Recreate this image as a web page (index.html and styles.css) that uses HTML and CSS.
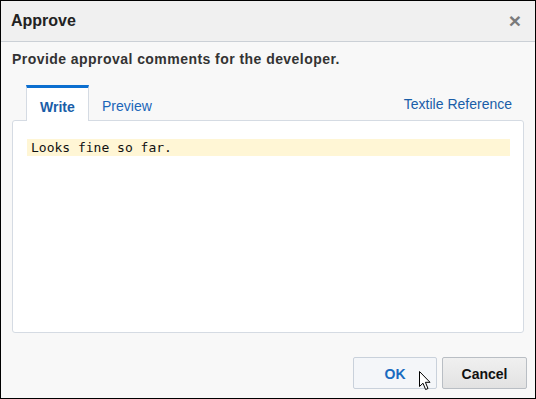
FILE: index.html
```html
<!DOCTYPE html>
<html lang="en">
<head>
    <meta charset="UTF-8">
    <title>Approve</title>
    <link rel="stylesheet" href="styles.css">
</head>
<body>
    <div class="dialog">
        <div class="dialog-header">
            <div class="dialog-title">Approve</div>
            <div class="dialog-close">&times;</div>
        </div>
        <div class="dialog-body">
            <div class="intro">Provide approval comments for the developer.</div>
            <div class="tabs">
                <div class="tab active">Write</div>
                <div class="tab">Preview</div>
                <div class="tab-link">Textile Reference</div>
            </div>
            <div class="editor">
                <div class="editor-line">Looks fine so far.</div>
            </div>
        </div>
        <div class="dialog-footer">
            <div class="btn btn-ok">OK
                <!-- mouse pointer -->
                <svg class="pointer" width="12" height="20" viewBox="0 0 12 20">
                    <path d="M0.5 0.5 L0.5 15.5 L4 12.2 L6.6 18.5 L9 17.5 L6.4 11.3 L11 11.3 Z" fill="#fff" stroke="#000" stroke-width="1"/>
                </svg>
            </div>
            <div class="btn btn-cancel">Cancel</div>
        </div>
    </div>
</body>
</html>
```

FILE: styles.css
```css
html, body { margin: 0; padding: 0; }
body { font-family: "Liberation Sans", Arial, sans-serif; background-color: #fff; }

.dialog {
width: 536px;
height: 399px;
box-sizing: border-box;
border: 1px solid #000;
background-color: #f8f8f8;
display: flex;
flex-direction: column;
}
.dialog > div { flex-shrink: 0; }

/* header */
.dialog-header {
height: 40px;
background-color: #f0f0f0;
border-bottom: 1px solid #cbd0d6;
display: flex;
align-items: center;
justify-content: space-between;
padding: 0 14px 0 10px;
}
.dialog-title { font-size: 16px; font-weight: bold; color: #222; }
.dialog-close { font-size: 21px; font-weight: bold; color: #7a7a7a; line-height: 1; margin-top: -1px; }

/* body */
.dialog-body { padding: 0 11px; }
.intro { font-size: 14px; letter-spacing: 0.45px; font-weight: bold; color: #333; margin-top: 9px; height: 17px; }

.tabs {
display: flex;
align-items: flex-end;
margin-top: 17px;
padding-left: 14px;
}
.tab {
height: 31px;
padding: 2px 13px 0 13px;
line-height: 34px;
font-size: 14px;
color: #1a66b8;
}
.tab.active {
border-top: 3px solid #0c6fd0;
border-left: 1px solid #d5dbe3;
border-right: 1px solid #d5dbe3;
background-color: #fff;
font-weight: bold;
color: #1a5ea8;
width: 35px;
margin-bottom: -1px;
position: relative;
}
.tab-link {
margin-left: auto;
margin-right: 12px;
font-size: 14px;
color: #1a5ea8;
line-height: 31px;
padding-top: 4px;
}

.editor {
height: 193px;
background-color: #fff;
border: 1px solid #d5dbe3;
border-radius: 3px;
padding: 18px 13px 0 14px;
}
.editor-line {
background-color: #fff6d5;
height: 17px;
line-height: 18px;
padding-left: 4px;
font-family: "DejaVu Sans Mono", monospace;
font-size: 13px;
color: #111;
}

/* footer */
.dialog-footer {
display: flex;
justify-content: flex-end;
gap: 5px;
padding: 24px 8px 0 0;
}
.btn {
height: 30px;
line-height: 33px;
text-align: center;
font-size: 14px;
font-weight: bold;
border-radius: 2px;
}
.btn-ok {
width: 82px;
border: 1px solid #c9d1db;
background-color: #f4f6f9;
color: #1a6bc0;
position: relative;
}
.btn-cancel {
width: 83px;
border: 1px solid #b9bec4;
background: linear-gradient(#f0f0f0, #e2e2e2);
color: #111;
}
.pointer { position: absolute; left: 65px; top: 13px; }
```
